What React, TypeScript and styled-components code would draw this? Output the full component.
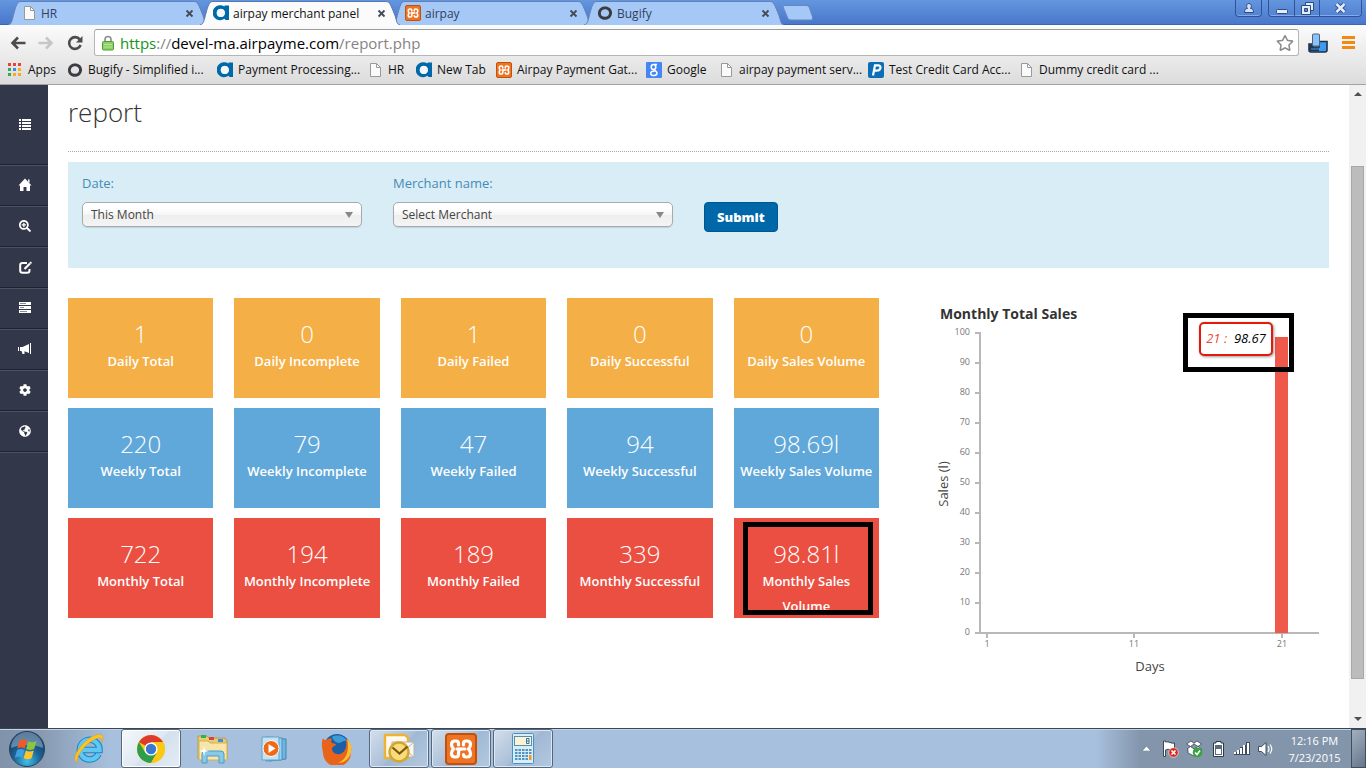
import React from 'react';
import styled, { createGlobalStyle, css } from 'styled-components';
import { FaCog, FaGlobeAmericas, FaRegStar, FaSearchPlus } from 'react-icons/fa';

const GlobalStyle = createGlobalStyle`
  *, *::before, *::after { box-sizing: border-box; }
  body {
    margin: 0;
    background: #fff;
    font-family: "Open Sans", "Noto Sans", sans-serif;
    color: #333;
  }
  button, select, input { font-family: inherit; }
`;

const Shell = styled.div`
  display: flex;
  flex-direction: column;
  min-height: 100vh;
`;

/* ---------- browser window ---------- */

const TabStrip = styled.div`
  display: flex;
  align-items: flex-end;
  height: 25px;
  padding-left: 8px;
  background: linear-gradient(#6496de, #4a77cb);
  border-bottom: 1px solid #3c66b0;
`;

const Tab = styled.div<{ $active?: boolean }>`
  position: relative;
  display: flex;
  align-items: center;
  flex: 0 0 200px;
  height: 25px;
  margin-right: -8px;
  margin-bottom: -1px;
  padding: 1px 14px 0 13px;
  gap: 4px;
  font-size: 12px;
  color: ${(p) => (p.$active ? '#111' : '#33415c')};
  z-index: ${(p) => (p.$active ? 2 : 1)};
`;

const TabShape = styled.svg`
  position: absolute;
  left: 0;
  top: 0;
  width: 200px;
  height: 25px;
  z-index: -1;
`;

const TabTitle = styled.span`
  flex: 1;
  white-space: nowrap;
  overflow: hidden;
`;

const TabClose = styled.button`
  display: flex;
  border: 0;
  padding: 0;
  background: none;
`;

const NewTabButton = styled.button`
  display: flex;
  border: 0;
  padding: 0 0 3px 6px;
  background: none;
`;

const WindowControls = styled.div`
  display: flex;
  align-self: flex-start;
  margin-left: auto;
  padding-right: 4px;
  gap: 6px;
`;

const ControlGroup = styled.div`
  display: flex;
  height: 17px;
  border: 1px solid #2e529b;
  border-top: 0;
  border-radius: 0 0 4px 4px;
  overflow: hidden;
  box-shadow: inset 0 -1px 0 #83abea;
`;

const ControlButton = styled.button<{ $wide?: boolean }>`
  display: flex;
  align-items: center;
  justify-content: center;
  width: ${(p) => (p.$wide ? 42 : 25)}px;
  padding: 0;
  border: 0;
  background: none;
  & + & { border-left: 1px solid #2e529b; }
`;

const Chrome = styled.div`
  background: linear-gradient(#fbfbfb, #dcdcdc);
  border-bottom: 1px solid #a3a3a3;
`;

const Toolbar = styled.div`
  display: flex;
  align-items: center;
  height: 35px;
  padding-left: 8px;
`;

const ToolButton = styled.button<{ $w: number }>`
  display: flex;
  align-items: center;
  justify-content: center;
  width: ${(p) => p.$w}px;
  height: 24px;
  padding: 0;
  border: 0;
  background: none;
`;

const AddressBar = styled.div`
  display: flex;
  align-items: center;
  flex: 1;
  height: 27px;
  margin: 0 7px 0 8px;
  padding: 0 4px 0 7px;
  gap: 6px;
  border: 1px solid #b5b5b5;
  border-top-color: #9c9c9c;
  border-radius: 3px;
  background: #fff;
  font-size: 15px;
  color: #848484;
`;

const Url = styled.span`
  flex: 1;
  line-height: 20px;
  em { font-style: normal; color: #149414; }
  b { font-weight: 400; color: #000; }
`;

const Bookmarks = styled.nav`
  display: flex;
  align-items: center;
  height: 24px;
  padding: 0 0 4px 7px;
`;

const Bookmark = styled.a<{ $w: number }>`
  display: flex;
  align-items: center;
  flex: 0 0 ${(p) => p.$w}px;
  gap: 5px;
  font-size: 12px;
  line-height: 16px;
  color: #111;
  text-decoration: none;
  white-space: nowrap;
  svg { flex: none; }
`;

/* ---------- page ---------- */

const Page = styled.div`
  display: flex;
  flex: 1;
`;

const Sidebar = styled.nav`
  flex: 0 0 48px;
  background: #33374a;
`;

const SideLink = styled.a<{ $tall?: boolean }>`
  display: flex;
  align-items: center;
  justify-content: center;
  height: ${(p) => (p.$tall ? 80 : 41)}px;
  padding-left: 2px;
  color: #fff;
  border-bottom: 1px solid #1f2230;
  box-shadow: 0 1px 0 #4d5061;
`;

const Main = styled.main`
  flex: 1;
  min-width: 0;
  padding: 0 20px;
`;

const Title = styled.h1`
  margin: 0;
  padding: 9px 0 20px;
  border-bottom: 1px dotted #aaa;
  font-size: 26px;
  line-height: 37px;
  font-weight: 300;
  color: #333;
`;

const FilterForm = styled.form`
  display: grid;
  grid-template-columns: repeat(4, 1fr);
  column-gap: 31px;
  height: 106px;
  margin-top: 10px;
  padding: 11px 34px 0 14px;
  background: #d9edf6;
`;

const Field = styled.div`
  display: flex;
  flex-direction: column;
  align-items: flex-start;
`;

const FieldLabel = styled.label`
  height: 29px;
  font-size: 13px;
  line-height: 20px;
  color: #468bb5;
`;

const SelectWrap = styled.div`
  position: relative;
  width: 100%;
  &::after {
    content: "";
    position: absolute;
    right: 9px;
    top: 10px;
    border: 4px solid transparent;
    border-top: 6px solid #888;
    border-bottom: 0;
    pointer-events: none;
  }
`;

const Select = styled.select`
  display: block;
  width: 100%;
  height: 25px;
  padding: 0 8px;
  appearance: none;
  border: 1px solid #aaa;
  border-radius: 5px;
  background: linear-gradient(#fff 20%, #f6f6f6 50%, #eee 52%, #f4f4f4 100%);
  box-shadow: 0 1px 1px rgba(0, 0, 0, 0.12);
  font-size: 12px;
  color: #444;
`;

const Submit = styled.button`
  height: 30px;
  margin-top: 29px;
  padding: 0 12px;
  border: 1px solid #00578f;
  border-radius: 4px;
  background: #0067a8;
  font-size: 13px;
  font-weight: 800;
  color: #fff;
`;

const Overview = styled.div`
  display: grid;
  grid-template-columns: 811fr 400fr;
  column-gap: 50px;
  align-items: start;
  margin-top: 30px;
`;

const Tiles = styled.div`
  display: grid;
  grid-template-columns: repeat(5, 1fr);
  gap: 10px 21px;
`;

const Tile = styled.section<{ $color: string }>`
  position: relative;
  height: 100px;
  padding: 20px 0 0;
  overflow: hidden;
  background: ${(p) => p.$color};
  color: #fff;
  text-align: center;
`;

const TileValue = styled.div`
  font-size: 24px;
  line-height: 31px;
  font-weight: 300;
`;

const TileLabel = styled.div<{ $narrow?: boolean }>`
  padding: ${(p) => (p.$narrow ? '0 20px' : '0')};
  font-size: 13px;
  line-height: 25px;
  font-weight: 600;
`;

const outline = css`
  position: absolute;
  border: 5px solid #000;
  pointer-events: none;
`;

const TileOutline = styled.div`
  ${outline}
  inset: 4px 6px 3px 9px;
`;

const ChartBox = styled.figure`
  position: relative;
  margin: 0;
`;

const ChartSvg = styled.svg`
  display: block;
  width: 100%;
  height: auto;
`;

const ChartOutline = styled.div`
  ${outline}
  right: 35px;
  top: 15px;
  width: 111px;
  height: 59px;
`;

const Tooltip = styled.div`
  position: absolute;
  right: 56px;
  top: 24px;
  width: 74px;
  height: 34px;
  border: 2px solid #e5190b;
  border-radius: 5px;
  background: #fff;
  box-shadow: 1px 1px 3px rgba(0, 0, 0, 0.4);
  font-size: 13px;
  line-height: 29px;
  font-style: italic;
  text-align: center;
  white-space: pre;
  color: #000;
  span { color: #ea4b3c; }
`;

const Scrollbar = styled.div`
  display: flex;
  flex-direction: column;
  align-items: center;
  flex: 0 0 17px;
  background: #f1f1f1;
`;

const ScrollArrow = styled.span<{ $down?: boolean }>`
  border: 4px solid transparent;
  border-${(p) => (p.$down ? 'top' : 'bottom')}: 4px solid #505050;
  border-${(p) => (p.$down ? 'bottom' : 'top')}: 0;
  margin: 7px 0;
`;

const ScrollTrack = styled.div`
  display: flex;
  flex: 1;
  padding: 63px 0 31px;
`;

const ScrollThumb = styled.div`
  width: 13px;
  border: 1px solid #a8a8a8;
  background: #bcbcbc;
`;

/* ---------- taskbar ---------- */

const Taskbar = styled.footer`
  display: flex;
  align-items: center;
  height: 40px;
  border-top: 1px solid #3a4654;
  box-shadow: inset 0 1px 0 #c4d4e6;
  background: linear-gradient(90deg, #8093aa 0, #8699b0 40px, #a7c0dd 110px, #a7c0dd calc(100% - 270px), #8395ab calc(100% - 225px), #8395ab 100%);
`;

const StartButton = styled.button`
  display: flex;
  justify-content: center;
  width: 54px;
  margin-right: 5px;
  padding: 0;
  border: 0;
  background: none;
`;

const Slot = styled.button<{ $open?: boolean; $active?: boolean }>`
  display: flex;
  align-items: center;
  justify-content: center;
  width: 60px;
  height: 39px;
  margin-right: 2px;
  padding: 0;
  border: 1px solid transparent;
  border-radius: 3px;
  background: none;
  ${(p) => p.$open && css`
    border-color: #56677c;
    background: linear-gradient(135deg, #d3dfec, #aabfd7 50%, #9fb8d4 52%, #b4c9e0);
    box-shadow: inset 0 0 0 1px #dce8f4;
  `}
  ${(p) => p.$active && css`
    background: linear-gradient(135deg, #f4f8fb, #dfe8f1 50%, #d3e0ed 52%, #e4edf6);
    box-shadow: inset 0 0 0 1px #fff;
  `}
`;

const Tray = styled.div`
  display: flex;
  align-items: center;
  margin-left: auto;
`;

const TrayIcon = styled.span`
  display: flex;
  align-items: center;
  justify-content: center;
  width: 24px;
  height: 20px;
`;

const Clock = styled.time`
  width: 73px;
  font-size: 11px;
  line-height: 17px;
  color: #fff;
  text-align: center;
`;

const ShowDesktop = styled.button`
  width: 15px;
  height: 39px;
  padding: 0;
  border: 1px solid #414e5e;
  background: linear-gradient(135deg, #a2afbf, #66778b);
`;

/* ---------- small drawings ---------- */

const DocIcon = () => (
  <svg width="16" height="16" viewBox="0 0 16 16" fill="#fafafa" stroke="#999">
    <path d="M3.500 1.500h6l4 4v9h-10z" />
    <path d="M9.500 1.500v4h4" fill="none" />
  </svg>
);

const AirpayIcon = () => (
  <svg width="16" height="16" viewBox="0 0 16 16">
    <path
      fillRule="evenodd"
      fill="#0069aa"
      d="M11.500 .500H16v14.500h-3.500l-1-1.200A7.500 7.500 0 1 1 11.500 1.600zM7.800 3.800a4.100 4.100 0 1 0 .010 0z"
    />
    <circle cx="7.800" cy="7.900" r="4" fill="#f4f8fb" />
  </svg>
);

const RingIcon = () => (
  <svg width="16" height="16" viewBox="0 0 16 16">
    <path
      fillRule="evenodd"
      fill="#3c3a42"
      d="M7 1.500C11 .800 14.500 3.200 15 7c.400 4-2.300 7.300-6.500 7.700C4.500 15 1 12.500 1 8.200 1 4.800 3.500 2 7 1.500zM7.500 4.200C5 4.500 3.700 6.300 3.800 8.500c.100 2.400 2.200 3.600 4.500 3.300 2.400-.300 4-2 3.800-4.400-.200-2.200-2.200-3.500-4.600-3.200z"
    />
  </svg>
);

const XamppIcon = ({ size = 16 }: { size?: number }) => (
  <svg width={size} height={size} viewBox="0 0 32 32">
    <rect x="1" y="1" width="30" height="30" rx="3" fill="#ee7424" stroke="#c3500b" strokeWidth="2" />
    <g fill="none" stroke="#fff" strokeWidth="3.200" strokeLinejoin="round" strokeLinecap="round">
      <path d="M13.500 12V10.500Q13.500 8 11 8H10Q6.500 8 6.500 11.500Q6.500 14 8.500 16Q6.500 18 6.500 20.500Q6.500 24 10 24H11Q13.500 24 13.500 21.500V20Q13.500 16 16 16H20" />
      <path d="M18.500 12V10.500Q18.500 8 21 8H22Q25.500 8 25.500 11.500Q25.500 14 23.500 16Q25.500 18 25.500 20.500Q25.500 24 22 24H21Q18.500 24 18.500 21.500" />
      <path d="M12 16h4" />
    </g>
  </svg>
);

const AppsIcon = () => {
  const colors = ['#ea4335', '#ea4335', '#ea4335', '#34a853', '#4285f4', '#fbab18', '#34a853', '#fbab18', '#fbab18'];
  return (
    <svg width="16" height="16" viewBox="0 0 16 16">
      {colors.map((c, i) => (
        <rect key={i} x={1 + (i % 3) * 5} y={1 + Math.floor(i / 3) * 5} width="3" height="3" fill={c} />
      ))}
    </svg>
  );
};

const GoogleIcon = () => (
  <svg width="16" height="16" viewBox="0 0 16 16">
    <rect width="16" height="16" rx="1" fill="#4486f4" />
    <g fill="none" stroke="#fff" strokeWidth="1.500">
      <ellipse cx="7.500" cy="5" rx="2.300" ry="2.500" />
      <path d="M8 2.500h3M8.500 7.200c-1.500 1 2.500 1.600 2.500 3.800 0 3.300-6.300 3.300-6.300.400 0-1.800 2-2.300 4-2.300" />
    </g>
  </svg>
);

const PaypalIcon = () => (
  <svg width="16" height="16" viewBox="0 0 16 16">
    <rect width="16" height="16" rx="2" fill="#0b6fb8" />
    <path d="M5 13.500L7 3.300h3c4 0 2.900 5.400-1.300 5.400H6.500" fill="none" stroke="#fff" strokeWidth="2.200" />
  </svg>
);

const CloseGlyph = () => (
  <svg width="9" height="9" viewBox="0 0 9 9" stroke="#444b58" strokeWidth="1.800">
    <path d="M1.500 1.500l6 6M7.500 1.500l-6 6" />
  </svg>
);

const ListGlyph = () => (
  <svg width="12" height="12" viewBox="0 0 12 12" fill="currentColor">
    {[0, 3, 6, 9].map((y) => (
      <path key={y} d={`M0 ${y}h2v2H0zM3 ${y}h9v2H3z`} />
    ))}
  </svg>
);

const HomeGlyph = () => (
  <svg width="14" height="14" viewBox="0 0 14 14" fill="currentColor">
    <path d="M7 .500L13.500 7.500H12V13H8.500V9h-3v4H2V7.500H.500zM10 1.500h1.500V5L10 3.500z" />
  </svg>
);

const BullhornGlyph = () => (
  <svg width="14" height="12" viewBox="0 0 14 12" fill="currentColor">
    <path d="M0 4h1v4H0zM2 4h2.500L11 1v9L6.500 8.200V11H4.500L3.500 8H2zM12 0h1v11h-1z" />
  </svg>
);

const ServerGlyph = () => (
  <svg width="12" height="12" viewBox="0 0 12 12" fill="currentColor">
    <path d="M0 0h12v3H0zM0 4h12v3H0zM0 8h12v3H0z" />
    <path d="M1 1h6v1H1zM1 5h4v1H1zM1 9h7v1H1z" fill="#8b8e9a" />
  </svg>
);

const EditGlyph = () => (
  <svg width="13" height="13" viewBox="0 0 13 13" fill="none" stroke="currentColor">
    <path d="M8 2H3.500Q1.200 2 1.200 4.200v5.300q0 2.300 2.300 2.300h4.700q2.300 0 2.300-2.300V8" strokeWidth="2" />
    <path d="M5.500 8L11 2.500" strokeWidth="2.200" />
    <path d="M11 1l1.500 1.500" strokeWidth="1.600" />
  </svg>
);

/* ---------- taskbar drawings ---------- */

const WindowsOrb = () => (
  <svg width="38" height="38" viewBox="0 0 38 38">
    <defs>
      <radialGradient id="orb" cx="50%" cy="85%" r="75%">
        <stop offset="0" stopColor="#3fc0e8" />
        <stop offset=".5" stopColor="#1d6598" />
        <stop offset="1" stopColor="#123a60" />
      </radialGradient>
    </defs>
    <circle cx="19" cy="19" r="17.500" fill="url(#orb)" stroke="#27435f" />
    <path d="M3 18a16 16 0 0 1 32 0c-9-4-23-4-32 0z" fill="#a9c6dc" opacity=".5" />
    <path d="M11.500 10.500c3-1.700 5-1.300 7.500 0l-2.200 8c-2.500-1.400-4.500-1.400-7.500 0z" fill="#ef5a28" />
    <path d="M20.200 11.200c2.500 1.300 5 1.400 8.300-.200l-2.300 8c-3 1.500-5.300 1.300-8 0z" fill="#8cc63f" />
    <path d="M9 20c2.800-1.400 5-1.300 7.500 0l-2.200 7.800c-2.300-1.400-4.500-1.400-7.400 0z" fill="#3fa0e0" />
    <path d="M17.800 20.400c2.500 1.300 4.800 1.400 8 0l-2.200 7.800c-3 1.500-5.400 1.300-8 0z" fill="#fdc42c" />
  </svg>
);

const IeIcon = () => (
  <svg width="34" height="34" viewBox="0 0 34 34" fill="none">
    <path d="M26.500 22a9.800 9.800 0 1 1 1-4H10" stroke="#1a84c7" strokeWidth="6.500" />
    <path d="M26.500 22a9.800 9.800 0 1 1 1-4H10" stroke="#5fc7f2" strokeWidth="4.500" />
    <path d="M6 30C-3 30 9 8 24 3c8-2.500 8 3 5.500 8 1-4 0-6.500-5-4.500C13 11 2 27 6 30z" fill="#fbc524" stroke="#e2a114" strokeWidth=".6" />
  </svg>
);

const ChromeIcon = () => (
  <svg width="30" height="30" viewBox="0 0 30 30">
    <circle cx="15" cy="15" r="14" fill="#fbc912" />
    <path d="M15 15L2.900 8A14 14 0 0 1 27.100 8H15z" fill="#dd3b2c" />
    <path d="M2.900 8A14 14 0 0 0 15 29l6-10.500-6 2.500-6-3z" fill="#2f9e49" />
    <path d="M15 8h12.100A14 14 0 0 1 15 29l6-10.500z" fill="#fbc912" />
    <circle cx="15" cy="15" r="6.600" fill="#fff" />
    <circle cx="15" cy="15" r="5.200" fill="#3a78cf" />
  </svg>
);

const ExplorerIcon = () => (
  <svg width="34" height="32" viewBox="0 0 34 32">
    <path d="M2 3h9l2 2h16l2 3v18H2z" fill="#e8cb7a" stroke="#bd9c46" />
    <path d="M5 2h5v3H5z" fill="#2fb14c" />
    <path d="M13 4h5v3h-5z" fill="#d8472f" />
    <path d="M22 6h5v3h-5z" fill="#3b8edc" />
    <path d="M3 8h9l2 2h17v17H3z" fill="#f7e6a8" stroke="#d0b058" />
    <path d="M6 30V21q0-3 3-3h16q3 0 3 3v9h-5v-7H11v7z" fill="#86c9e8" stroke="#4f9cc4" />
    <path d="M8 13l1 4 4 1-4 1-1 4-1-4-4-1 4-1z" fill="#fff" />
  </svg>
);

const MediaIcon = () => (
  <svg width="30" height="28" viewBox="0 0 30 28">
    <path d="M9 3l17 1v20l-17 2z" fill="#6fb5dd" stroke="#3f86b4" />
    <path d="M6 2l16 1v22l-16 1z" fill="#9bd0ee" stroke="#4a93c0" />
    <path d="M2 2h17v23H2z" fill="#c3e2f3" stroke="#5ea4cc" />
    <circle cx="11" cy="13.500" r="8" fill="#ee6a16" stroke="#fff" />
    <path d="M8.500 9v9l7-4.500z" fill="#fff" />
  </svg>
);

const FirefoxIcon = () => (
  <svg width="32" height="32" viewBox="0 0 32 32">
    <circle cx="16" cy="14" r="13" fill="#1d5fa6" />
    <path d="M11 4c5-3 13-1 15 4-4-1-5 2-8 2s-6-3-7-6z" fill="#3d9bd8" />
    <path d="M2 5c1 2 2 2 3 2 2-1 4-2 6-1-1 2-1 3 0 4l4 1c0 2-4 2-4 5 0 4 6 7 10 4 4-2 5-8 4-14 4 3 6 7 5 13a14 14 0 0 1-28 1C1 15 0 10 2 5z" fill="#e8641b" />
    <path d="M26 6c4 4 5 8 4 13-1 6-6 11-13 11 8-3 12-12 9-24z" fill="#fbc02d" />
  </svg>
);

const OutlookIcon = () => (
  <svg width="34" height="32" viewBox="0 0 34 32">
    <path d="M3 2h20l3 3v20H3z" fill="#fffaf0" stroke="#efb234" strokeWidth="2.400" />
    <path d="M10 9h22v15H10z" fill="#f7f7f5" stroke="#b7b4a6" />
    <path d="M32 9l-9 8 9 7" fill="none" stroke="#b7b4a6" />
    <circle cx="17" cy="19" r="9.500" fill="#f9dc7c" stroke="#d6a430" strokeWidth="2.400" />
    <path d="M10.500 14.500l7 6 8-7" fill="none" stroke="#7a5a12" strokeWidth="2.200" />
  </svg>
);

const CalculatorIcon = () => (
  <svg width="24" height="32" viewBox="0 0 24 32">
    <rect x="1.500" y=".500" width="21" height="30" rx="1" fill="#d9edf9" stroke="#4792c4" />
    <rect x="3.500" y="3.500" width="17" height="9" fill="#fbf3d1" stroke="#588db0" />
    <path d="M15.500 5.500h2.500v5h-2.500zM15.500 8h2.500" fill="none" stroke="#3970ab" />
    {[0, 1, 2, 3].map((r) =>
      [0, 1, 2, 3, 4].map((c) => (
        <rect
          key={`${r}-${c}`}
          x={4 + c * 3.5}
          y={16 + r * 3}
          width="2.500"
          height={c === 4 && r === 2 ? 3 : 2}
          fill={c === 4 && r > 1 ? '#f29a1f' : '#5292bf'}
        />
      )),
    )}
  </svg>
);

/* ---------- data ---------- */

const tabs = [
  { title: 'HR', icon: <DocIcon /> },
  { title: 'airpay merchant panel', icon: <AirpayIcon />, active: true },
  { title: 'airpay', icon: <XamppIcon /> },
  { title: 'Bugify', icon: <RingIcon /> },
];

const bookmarks = [
  { label: 'Apps', icon: <AppsIcon />, w: 60 },
  { label: 'Bugify - Simplified i...', icon: <RingIcon />, w: 150 },
  { label: 'Payment Processing...', icon: <AirpayIcon />, w: 150 },
  { label: 'HR', icon: <DocIcon />, w: 49 },
  { label: 'New Tab', icon: <AirpayIcon />, w: 80 },
  { label: 'Airpay Payment Gat...', icon: <XamppIcon />, w: 150 },
  { label: 'Google', icon: <GoogleIcon />, w: 72 },
  { label: 'airpay payment serv...', icon: <DocIcon />, w: 150 },
  { label: 'Test Credit Card Acc...', icon: <PaypalIcon />, w: 150 },
  { label: 'Dummy credit card ...', icon: <DocIcon />, w: 150 },
];

const sideItems = [
  { name: 'Menu', icon: <ListGlyph /> },
  { name: 'Home', icon: <HomeGlyph /> },
  { name: 'Search', icon: <FaSearchPlus size={12} /> },
  { name: 'Edit', icon: <EditGlyph /> },
  { name: 'Transactions', icon: <ServerGlyph /> },
  { name: 'Announcements', icon: <BullhornGlyph /> },
  { name: 'Settings', icon: <FaCog size={12} /> },
  { name: 'Language', icon: <FaGlobeAmericas size={12} /> },
];

const rows = [
  { period: 'Daily', color: '#f4af47', values: ['1', '0', '1', '0', '0'] },
  { period: 'Weekly', color: '#61a8da', values: ['220', '79', '47', '94', '98.69l'] },
  { period: 'Monthly', color: '#eb4f41', values: ['722', '194', '189', '339', '98.81l'] },
];
const metrics = ['Total', 'Incomplete', 'Failed', 'Successful', 'Sales Volume'];

const yTicks = [0, 10, 20, 30, 40, 50, 60, 70, 80, 90, 100];
const xTicks = [
  { label: '1', x: 58 },
  { label: '11', x: 205 },
  { label: '21', x: 353 },
];

const SalesChart = () => (
  <ChartBox>
    <ChartSvg viewBox="0 0 400 390" role="img" aria-label="Monthly Total Sales">
      <text x="11" y="21" fontSize="14" fontWeight="700" fill="#333">Monthly Total Sales</text>
      <g stroke="#b8b8b8" strokeWidth="2">
        <path d="M51 34V335M46 335H390" />
        {yTicks.map((v) => <path key={v} d={`M46 ${335 - v * 3}h5`} />)}
        {xTicks.map((t) => <path key={t.label} d={`M${t.x} 335v5`} />)}
      </g>
      <g fontSize="9" fill="#777" textAnchor="end">
        {yTicks.map((v) => <text key={v} x="41" y={337 - v * 3}>{v}</text>)}
      </g>
      <g fontSize="9" fill="#777" textAnchor="middle">
        {xTicks.map((t) => <text key={t.label} x={t.x} y="349">{t.label}</text>)}
      </g>
      <rect x="346" y="39" width="13" height="296" fill="#ee594c" />
      <text x="221" y="373" fontSize="13" fill="#444" textAnchor="middle">Days</text>
      <text transform="translate(19 186) rotate(-90)" fontSize="13" fill="#444" textAnchor="middle">Sales (l)</text>
    </ChartSvg>
    <Tooltip><span>21 : </span> 98.67</Tooltip>
    <ChartOutline />
  </ChartBox>
);

export default function App() {
  return (
    <Shell>
      <GlobalStyle />
      <header>
        <TabStrip>
          {tabs.map((t) => (
            <Tab key={t.title} $active={t.active}>
              <TabShape viewBox="0 0 200 25">
                <path
                  d="M0 25C4 24 4 20 6 13S9 1.500 13 1.500H186C190 1.500 191 6 194 13s2 11 6 12"
                  fill={t.active ? '#fbfbfb' : '#a5c8f6'}
                  stroke={t.active ? '#5478b0' : '#5f82ba'}
                />
              </TabShape>
              {t.icon}
              <TabTitle>{t.title}</TabTitle>
              <TabClose aria-label="Close tab"><CloseGlyph /></TabClose>
            </Tab>
          ))}
          <NewTabButton aria-label="New tab">
            <svg width="32" height="16" viewBox="0 0 32 16">
              <path d="M2 .500h22c2 0 3 1 3.500 2.500l3 9c.500 2-.500 3-2 3H9c-2 0-3-1-3.500-2.500l-4-9.500C1 1.500 1 .500 2 .500z" fill="#a5c8f6" stroke="#6488c2" />
            </svg>
          </NewTabButton>
          <WindowControls>
            <ControlGroup>
              <ControlButton aria-label="Profile">
                <svg width="12" height="12" viewBox="0 0 12 12" fill="#d5e3f8" stroke="#2c4a86">
                  <path d="M1.500 10.500c0-3 1-4 3-4C3 4.500 3.500 1.500 6 1.500s3 3 1.500 5c2 0 3 1 3 4z" />
                </svg>
              </ControlButton>
            </ControlGroup>
            <ControlGroup>
              <ControlButton aria-label="Minimize">
                <svg width="12" height="12" viewBox="0 0 12 12" fill="#e4edfa" stroke="#2c4a86">
                  <rect x=".500" y="7.500" width="11" height="4" rx="1" />
                </svg>
              </ControlButton>
              <ControlButton aria-label="Restore">
                <svg width="13" height="13" viewBox="0 0 13 13" fill="#e4edfa" stroke="#2c4a86">
                  <path d="M4.500.500h8v8h-8z" />
                  <path d="M.500 3.500h9v9h-9z" />
                  <path d="M3.500 6.500h3v3h-3z" fill="#5b89d6" />
                </svg>
              </ControlButton>
              <ControlButton $wide aria-label="Close">
                <svg width="13" height="12" viewBox="0 0 13 12" fill="none">
                  <path d="M2.500 2l8 8M10.500 2l-8 8" stroke="#2c4a86" strokeWidth="4.500" />
                  <path d="M2.500 2l8 8M10.500 2l-8 8" stroke="#e4edfa" strokeWidth="2.500" />
                </svg>
              </ControlButton>
            </ControlGroup>
          </WindowControls>
        </TabStrip>
        <Chrome>
          <Toolbar>
            <ToolButton $w={20} aria-label="Back">
              <svg width="16" height="14" viewBox="0 0 16 14" fill="none" stroke="#4c4c4c" strokeWidth="2.600">
                <path d="M15.500 7H3M8 1.500L2.500 7 8 12.500" />
              </svg>
            </ToolButton>
            <ToolButton $w={36} aria-label="Forward">
              <svg width="16" height="14" viewBox="0 0 16 14" fill="none" stroke="#c6c6c6" strokeWidth="2.600">
                <path d="M.500 7H13M8 1.500L13.500 7 8 12.500" />
              </svg>
            </ToolButton>
            <ToolButton $w={22} aria-label="Reload">
              <svg width="16" height="16" viewBox="0 0 16 16">
                <path d="M12.800 4.500A5.900 5.900 0 1 0 13.600 10" fill="none" stroke="#4c4c4c" strokeWidth="2.600" />
                <path d="M15.500 1v6.500H9z" fill="#4c4c4c" />
              </svg>
            </ToolButton>
            <AddressBar>
              <svg width="12" height="16" viewBox="0 0 12 16">
                <path d="M3 8V4.500a3 3 0 0 1 6 0V8" fill="none" stroke="#8c8c8c" strokeWidth="1.600" />
                <rect x=".500" y="6.500" width="11" height="8.500" rx="1" fill="#8bd164" stroke="#4e9e35" />
                <path d="M2 9.500h8M2 12h8" stroke="#b6e59a" />
              </svg>
              <Url><em>https</em>://<b>devel-ma.airpayme.com</b>/report.php</Url>
              <FaRegStar size={18} color="#8a8a8a" />
            </AddressBar>
            <ToolButton $w={24} aria-label="Extension">
              <svg width="20" height="20" viewBox="0 0 20 20" stroke="#1f3147">
                <path d="M1 11h4v3h6V8.500h8v8.500q0 2-2 2H3q-2 0-2-2z" fill="#3e9af0" strokeWidth="1.600" />
                <path d="M1 11.500h4v3h6V18H2.500Q1 18 1 16.500z" fill="#25364c" stroke="none" />
                <rect x="4.500" y="1" width="7" height="12" rx="1" fill="#8cc2f5" stroke="#44658a" />
                <path d="M3 16h14" stroke="#3e9af0" />
              </svg>
            </ToolButton>
            <ToolButton $w={36} aria-label="Menu">
              <svg width="13" height="13" viewBox="0 0 13 13" stroke="#f08a12" strokeWidth="3">
                <path d="M0 1.500h13M0 6.500h13M0 11.500h13" />
              </svg>
            </ToolButton>
          </Toolbar>
          <Bookmarks>
            {bookmarks.map((b) => (
              <Bookmark key={b.label} href="#" $w={b.w}>{b.icon}{b.label}</Bookmark>
            ))}
          </Bookmarks>
        </Chrome>
      </header>

      <Page>
        <Sidebar>
          {sideItems.map((s, i) => (
            <SideLink key={s.name} href="#" aria-label={s.name} $tall={i === 0}>{s.icon}</SideLink>
          ))}
        </Sidebar>
        <Main>
          <Title>report</Title>
          <FilterForm onSubmit={(e) => e.preventDefault()}>
            <Field>
              <FieldLabel htmlFor="date">Date:</FieldLabel>
              <SelectWrap>
                <Select id="date"><option>This Month</option></Select>
              </SelectWrap>
            </Field>
            <Field>
              <FieldLabel htmlFor="merchant">Merchant name:</FieldLabel>
              <SelectWrap>
                <Select id="merchant"><option>Select Merchant</option></Select>
              </SelectWrap>
            </Field>
            <Field>
              <Submit type="submit">Submit</Submit>
            </Field>
          </FilterForm>
          <Overview>
            <Tiles>
              {rows.map((r) =>
                r.values.map((v, i) => {
                  const marked = r.period === 'Monthly' && i === 4;
                  return (
                    <Tile key={r.period + metrics[i]} $color={r.color}>
                      <TileValue>{v}</TileValue>
                      <TileLabel $narrow={marked}>{`${r.period} ${metrics[i]}`}</TileLabel>
                      {marked && <TileOutline />}
                    </Tile>
                  );
                }),
              )}
            </Tiles>
            <SalesChart />
          </Overview>
        </Main>
        <Scrollbar>
          <ScrollArrow />
          <ScrollTrack><ScrollThumb /></ScrollTrack>
          <ScrollArrow $down />
        </Scrollbar>
      </Page>

      <Taskbar>
        <StartButton aria-label="Start"><WindowsOrb /></StartButton>
        <Slot aria-label="Internet Explorer"><IeIcon /></Slot>
        <Slot aria-label="Chrome" $open $active><ChromeIcon /></Slot>
        <Slot aria-label="Explorer"><ExplorerIcon /></Slot>
        <Slot aria-label="Media Player"><MediaIcon /></Slot>
        <Slot aria-label="Firefox"><FirefoxIcon /></Slot>
        <Slot aria-label="Outlook" $open><OutlookIcon /></Slot>
        <Slot aria-label="XAMPP" $open><XamppIcon size={32} /></Slot>
        <Slot aria-label="Calculator" $open><CalculatorIcon /></Slot>
        <Tray>
          <TrayIcon>
            <svg width="9" height="5" viewBox="0 0 9 5"><path d="M0 5l4.500-5L9 5z" fill="#fff" stroke="#4b5a6d" strokeWidth=".500" /></svg>
          </TrayIcon>
          <TrayIcon>
            <svg width="17" height="18" viewBox="0 0 17 18">
              <path d="M1.500 1v15.500h2V10c4-2 5 1 9 0V3c-4 1-5-2-9-1V1z" fill="#fff" stroke="#3c4856" />
              <circle cx="11.500" cy="12.500" r="4.800" fill="#d92b20" stroke="#fff" strokeWidth=".600" />
              <path d="M9.500 10.500l4 4M13.500 10.500l-4 4" stroke="#fff" strokeWidth="1.600" />
            </svg>
          </TrayIcon>
          <TrayIcon>
            <svg width="17" height="18" viewBox="0 0 17 18">
              <path d="M5 1l3 2.300L11 1l4.500 3L12 6.500 15.500 9v3L8 16l-6-3V9.500L1 9l3.500-2.500L.500 4zM8 4L4.500 6.500 8 9l4-2.500z" fillRule="evenodd" fill="#fff" stroke="#3c4856" strokeWidth=".800" />
              <circle cx="11.500" cy="12.500" r="4.800" fill="#35a53b" />
              <path d="M9 12.500l2 2 3-4" fill="none" stroke="#fff" strokeWidth="1.600" />
            </svg>
          </TrayIcon>
          <TrayIcon>
            <svg width="11" height="16" viewBox="0 0 11 16">
              <path d="M3 2V.500h5V2h2.500v13.500H.500V2z" fill="#fff" stroke="#2f3944" />
              <path d="M2 4h7v10H2z" fill="#5b6b7e" />
              <path d="M3 8h5v5H3z" fill="#fff" />
            </svg>
          </TrayIcon>
          <TrayIcon>
            <svg width="16" height="13" viewBox="0 0 16 13" fill="#fff">
              <path d="M0 10h3v3H0zM3 8h3v5H3zM6 5h3v8H6zM9 3h3v10H9zM12 0h4v13h-4z" fill="#3f4c5b" />
              <path d="M0 10h2v2H0zM3 8h2v4H3zM6 6h2v6H6zM9 3h2v9H9zM13 1h2v11h-2z" />
            </svg>
          </TrayIcon>
          <TrayIcon>
            <svg width="16" height="14" viewBox="0 0 16 14">
              <path d="M.500 4.500h3L8 .500v13l-4.500-4h-3z" fill="#fff" stroke="#3f4c5b" />
              <path d="M10 4q2 3 0 6M12 2.500q3.500 4.500 0 9" fill="none" stroke="#fff" strokeWidth="1.200" />
            </svg>
          </TrayIcon>
          <Clock>12:16 PM<br />7/23/2015</Clock>
          <ShowDesktop aria-label="Show desktop" />
        </Tray>
      </Taskbar>
    </Shell>
  );
}
